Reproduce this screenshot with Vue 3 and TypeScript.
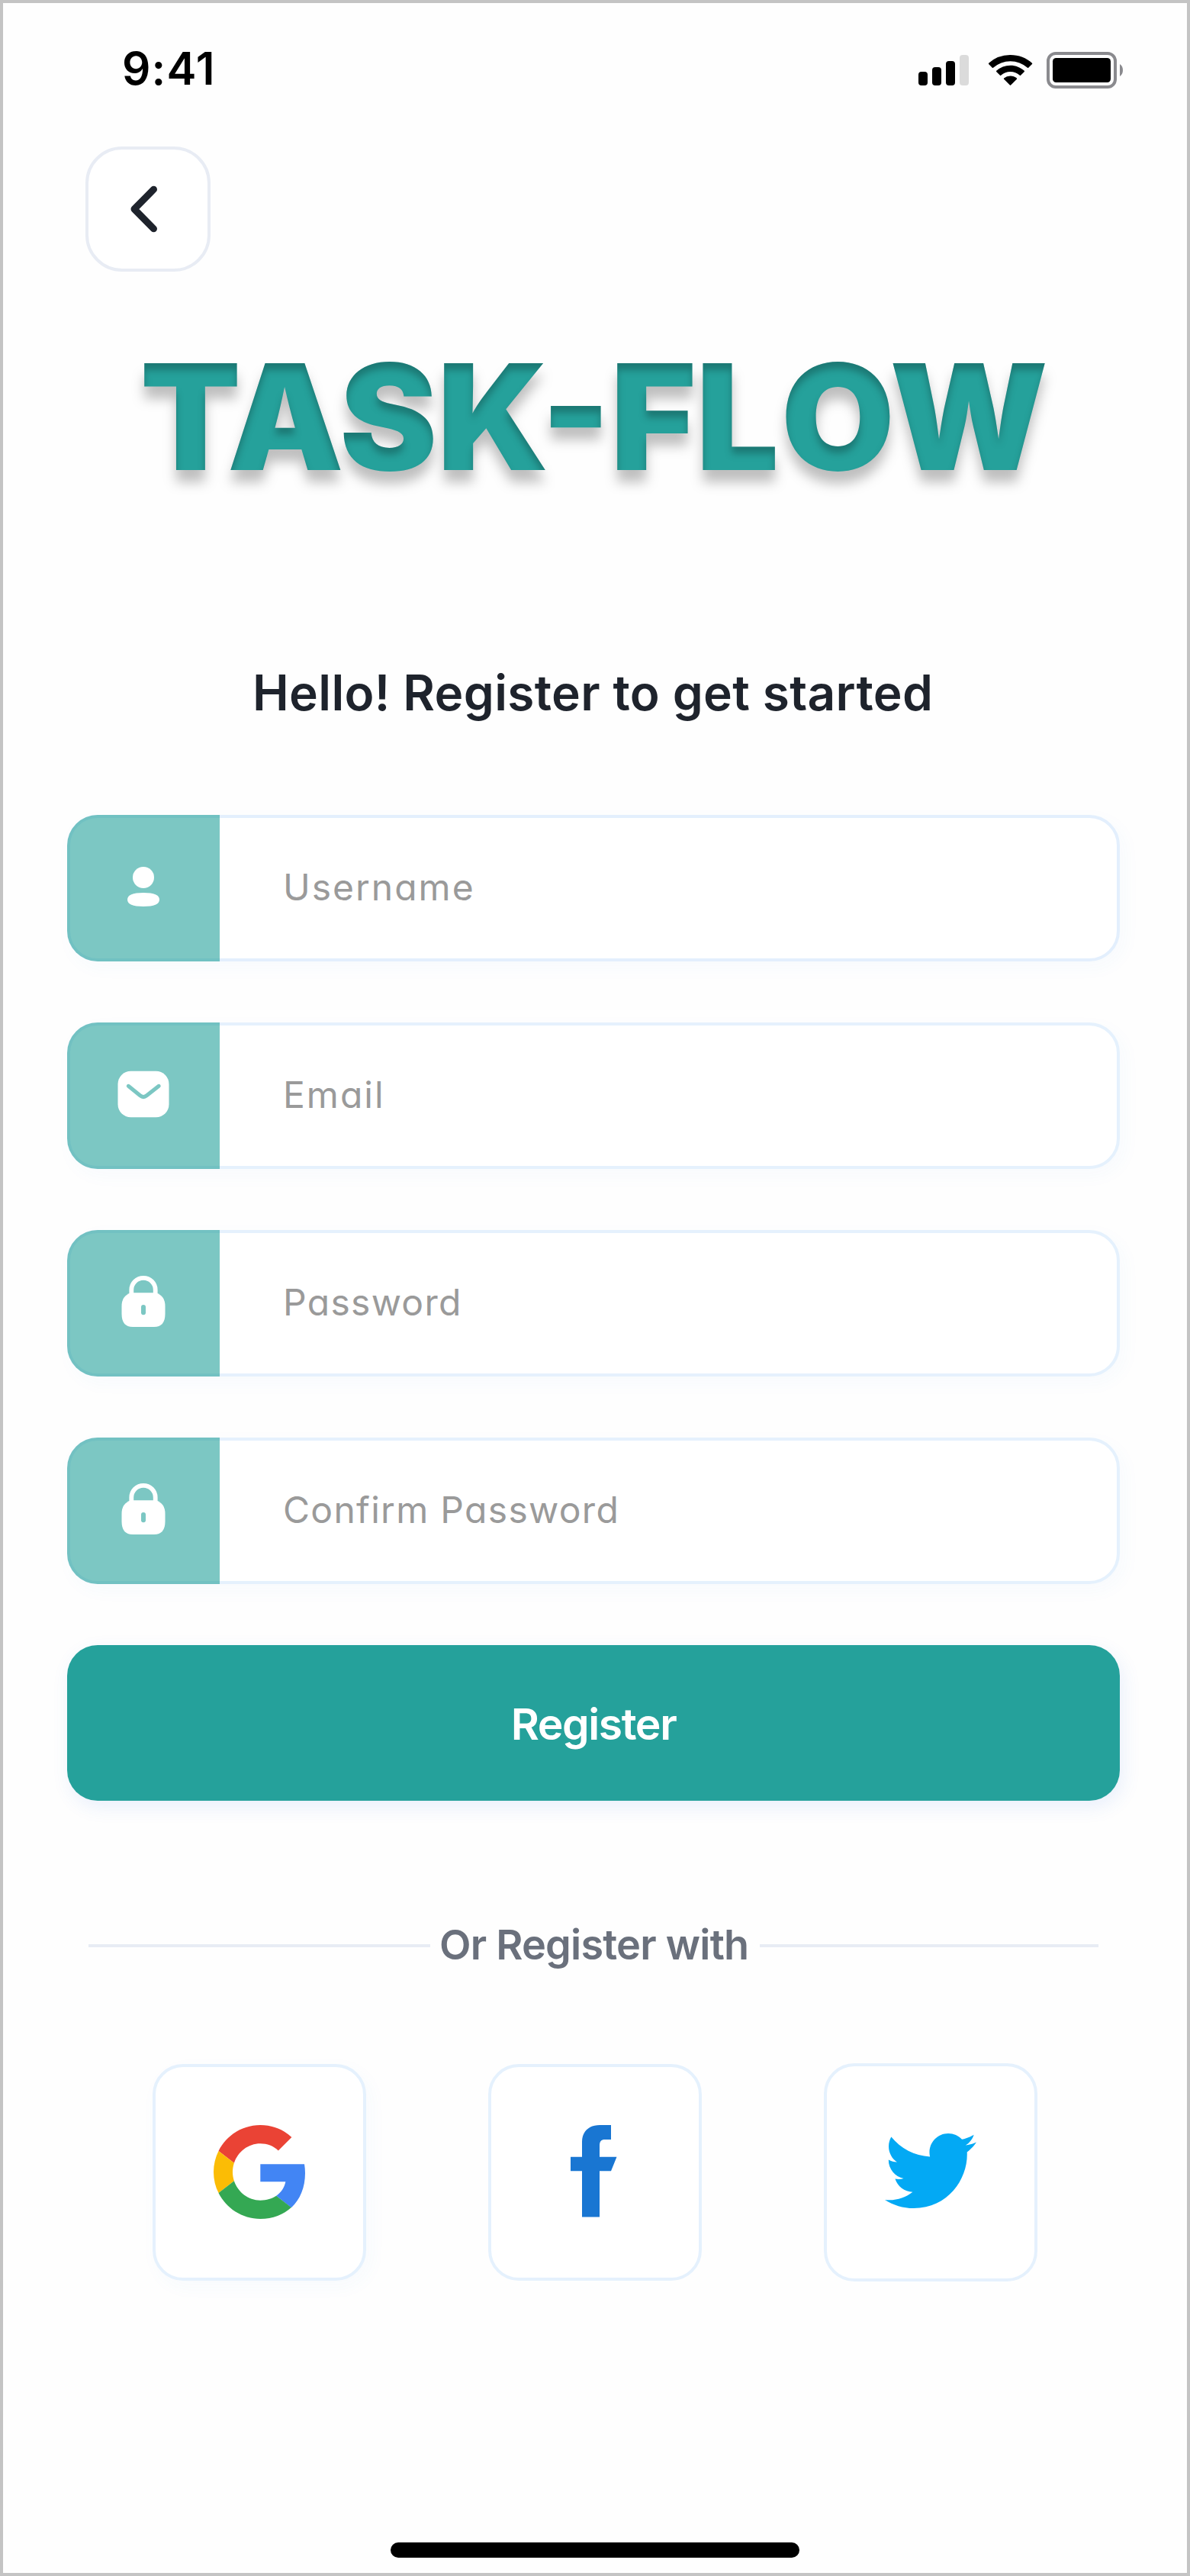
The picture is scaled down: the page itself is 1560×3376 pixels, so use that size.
<script setup lang="ts">
type IconName = 'user' | 'mail' | 'lock'

interface Field {
  id: string
  label: string
  icon: IconName
}

const fields: Field[] = [
  { id: 'username', label: 'Username', icon: 'user' },
  { id: 'email', label: 'Email', icon: 'mail' },
  { id: 'password', label: 'Password', icon: 'lock' },
  { id: 'confirm', label: 'Confirm Password', icon: 'lock' },
]
</script>

<template>
  <div class="screen">
    <header class="status-bar">
      <span class="time">9:41</span>
      <div class="indicators">
        <svg class="signal" width="66" height="40" viewBox="0 0 66 40">
          <rect x="0" y="22" width="12" height="18" rx="4" />
          <rect x="18" y="16" width="12" height="24" rx="4" />
          <rect x="36" y="8" width="12" height="32" rx="4" />
          <rect x="54" y="0" width="12" height="40" rx="4" fill="#dbdbdb" />
        </svg>
        <svg class="wifi" width="58" height="40" viewBox="0 0 58 40">
          <path d="M28.5 0C39.500 0 49.600 4 57 10.700Q57.500 11.300 57 11.900L52.200 16.700Q51.700 17.200 51 16.700A34 34 0 0 0 6 16.700Q5.300 17.200 4.800 16.700L.1 11.900Q-.4 11.300.1 10.700A42.500 42.500 0 0 1 28.500 0Z" />
          <path d="M28.500 13.700C35.600 13.700 42 16.400 46.800 20.800Q47.300 21.400 46.800 21.900L42 26.700Q41.500 27.200 40.900 26.700A18.500 18.500 0 0 0 16.100 26.700Q15.500 27.200 15 26.700L10.200 21.900Q9.700 21.400 10.200 20.800A27 27 0 0 1 28.500 13.700Z" />
          <path d="M28.500 27.500C31.800 27.500 34.600 28.700 36.900 30.600Q37.400 31.200 36.900 31.700L29.100 39.500Q28.500 40.100 27.900 39.500L20.100 31.700Q19.600 31.200 20.100 30.600A13 13 0 0 1 28.500 27.500Z" />
        </svg>
        <svg class="battery" width="100" height="48" viewBox="0 0 100 48">
          <rect x="2" y="2" width="88" height="44" rx="10" fill="none" stroke="#8a8a8e" stroke-width="4" />
          <rect x="8" y="8" width="76" height="32" rx="4.500" />
          <path d="M96 16C98.600 17.500 100 20.500 100 24S98.600 30.500 96 32Z" fill="#8a8a8e" />
        </svg>
      </div>
    </header>

    <button class="back" type="button" aria-label="Back">
      <svg width="40" height="64" viewBox="0 0 40 64">
        <path d="M33.500 6.200 8 32 33.500 57.800" fill="none" stroke="#1e232c" stroke-width="9" stroke-linecap="round" stroke-linejoin="round" />
      </svg>
    </button>

    <svg class="defs" width="0" height="0" aria-hidden="true">
      <filter id="emboss" x="-5%" y="-20%" width="110%" height="150%" color-interpolation-filters="sRGB">
        <feGaussianBlur in="SourceAlpha" stdDeviation="8" result="dropBlur" />
        <feOffset in="dropBlur" dy="16" result="dropOffset" />
        <feFlood flood-color="#000" flood-opacity="0.250" result="shade" />
        <feComposite in="shade" in2="dropOffset" operator="in" result="drop" />
        <feGaussianBlur in="SourceAlpha" stdDeviation="5" result="innerBlur" />
        <feOffset in="innerBlur" dy="9" result="innerOffset" />
        <feComposite in="SourceAlpha" in2="innerOffset" operator="out" result="innerMask" />
        <feComposite in="shade" in2="innerMask" operator="in" result="inner" />
        <feMerge>
          <feMergeNode in="drop" />
          <feMergeNode in="SourceGraphic" />
          <feMergeNode in="inner" />
        </feMerge>
      </filter>
    </svg>
    <h1 class="brand">TASK-FL<span class="tail">OW</span></h1>
    <h2 class="greeting">Hello! Register to get started</h2>

    <form class="form" @submit.prevent>
      <label v-for="field in fields" :key="field.id" class="field" :class="field.id">
        <span class="badge">
          <svg v-if="field.icon === 'user'" width="80" height="80" viewBox="0 0 80 80" fill="#fff">
            <circle cx="40" cy="26" r="14" />
            <path d="M40 46C54 46 61 49 61 55S54 64 40 64 19 61 19 55 26 46 40 46Z" />
          </svg>
          <svg v-else-if="field.icon === 'mail'" width="80" height="80" viewBox="0 0 80 80">
            <rect x="6.500" y="7.800" width="67" height="60.400" rx="17" fill="#fff" />
            <path d="M20.300 27.300 35.700 39.800Q40 43.300 44.300 39.800L60.200 27.300" fill="none" stroke="#7cc7c3" stroke-width="5" stroke-linecap="round" />
          </svg>
          <svg v-else width="80" height="80" viewBox="0 0 80 80">
            <path d="M24.300 29.500V22.500A15.700 15.700 0 0 1 55.700 22.500V29.500" fill="none" stroke="#fff" stroke-width="5.800" />
            <path d="M24 26.300H56Q68.500 30 68.500 44V54Q68.500 71 54 71H26Q11.500 71 11.500 54V44Q11.500 30 24 26.300Z" fill="#fff" />
            <rect x="37" y="42" width="6" height="13.300" rx="3" fill="#7cc7c3" />
          </svg>
        </span>
        <span class="placeholder">{{ field.label }}</span>
      </label>
      <button class="submit" type="submit">Register</button>
    </form>

    <div class="divider">
      <span class="rule left"></span>
      <span class="or">Or Register with</span>
      <span class="rule right"></span>
    </div>

    <div class="socials">
      <button class="social google" type="button" aria-label="Google">
        <svg width="120" height="123" viewBox="0 0 46.980 48" preserveAspectRatio="none">
          <path fill="#ea4335" d="M24 9.500c3.540 0 6.710 1.220 9.210 3.600l6.850-6.850C35.900 2.380 30.470 0 24 0 14.620 0 6.510 5.380 2.560 13.220l7.980 6.190C12.430 13.720 17.740 9.500 24 9.500z" />
          <path fill="#4285f4" d="M46.980 24.550c0-1.570-.15-3.090-.38-4.550H24v9.020h12.940c-.58 2.960-2.260 5.480-4.780 7.180l7.730 6c4.510-4.180 7.090-10.360 7.090-17.650z" />
          <path fill="#fbbc05" d="M10.530 28.590c-.48-1.450-.76-2.990-.76-4.590s.27-3.140.76-4.590l-7.980-6.190C.92 16.460 0 20.120 0 24c0 3.880.92 7.540 2.560 10.780l7.970-6.190z" />
          <path fill="#34a853" d="M24 48c6.480 0 11.930-2.130 15.890-5.810l-7.730-6c-2.150 1.450-4.920 2.300-8.160 2.300-6.260 0-11.570-4.220-13.470-9.910l-7.980 6.190C6.510 42.620 14.620 48 24 48z" />
        </svg>
      </button>
      <button class="social facebook" type="button" aria-label="Facebook">
        <svg width="61" height="121" viewBox="0 0 61 121">
          <path fill="#1976d2" d="M38 120.500V60.300H53L60.500 41.700H38V27C38 21.500 40 19 45 19H53V0H38.500C24.500 0 15 8 15 22V41.700H0V60.300H15V120.500Z" />
        </svg>
      </button>
      <button class="social twitter" type="button" aria-label="Twitter">
        <svg width="120" height="98" viewBox="6 9 36 29" preserveAspectRatio="none">
          <path fill="#03a9f4" d="M42 12.429c-1.323.586-2.746.977-4.247 1.162 1.526-.906 2.700-2.351 3.251-4.058-1.428.837-3.010 1.452-4.693 1.776C34.967 9.884 33.050 9 30.926 9c-4.080 0-7.387 3.278-7.387 7.320 0 .572.067 1.129.193 1.670-6.138-.308-11.582-3.226-15.224-7.654-.64 1.082-1 2.349-1 3.686 0 2.541 1.301 4.778 3.285 6.096-1.211-.037-2.351-.374-3.349-.914 0 .022 0 .055 0 .086 0 3.551 2.547 6.508 5.923 7.181-.617.169-1.269.263-1.941.263-.477 0-.942-.054-1.392-.135.94 2.902 3.667 5.023 6.898 5.086-2.528 1.960-5.712 3.134-9.174 3.134-.598 0-1.183-.034-1.761-.104C9.268 36.786 13.152 38 17.321 38c13.585 0 21.017-11.156 21.017-20.834 0-.317-.01-.633-.025-.945C39.763 15.197 41.013 13.905 42 12.429" />
        </svg>
      </button>
    </div>

    <div class="home-indicator"></div>
  </div>
</template>

<style>
body {
  margin: 0;
  background: #fefefe;
}
</style>

<style scoped>
.screen {
  box-sizing: border-box;
  display: flex;
  flex-direction: column;
  width: 1560px;
  height: 3376px;
  border: 4px solid #c4c4c4;
  background: #fefefe;
  font-family: Inter, 'Liberation Sans', sans-serif;
  white-space: nowrap;
}

button {
  padding: 0;
  font: inherit;
}

svg {
  display: block;
  flex: none;
}

.defs {
  position: absolute;
}

.status-bar {
  display: flex;
  justify-content: space-between;
  align-items: center;
  height: 48px;
  margin: 64px 84px 0 156px;
}

.time {
  padding-bottom: 4px;
  color: #000;
  font-size: 58.5px;
  font-weight: 600;
  line-height: 44px;
  letter-spacing: 1.2px;
}

.indicators {
  display: flex;
  align-items: center;
}

.signal {
  margin-right: 26px;
}

.wifi {
  margin-right: 18px;
}

.back {
  box-sizing: border-box;
  display: flex;
  justify-content: center;
  align-items: center;
  width: 164px;
  height: 164px;
  margin: 76px 0 0 108px;
  padding-right: 12px;
  border: 4px solid #e8ecf4;
  border-radius: 48px;
  background: #fff;
}

.brand {
  margin: 70px 0 0 180px;
  color: #25a19b;
  font-size: 192px;
  font-weight: 900;
  line-height: 240px;
  filter: url(#emboss);
}

.tail {
  margin-left: 3px;
  letter-spacing: 2px;
}

.greeting {
  margin: 202px 0 0 327px;
  color: #1e232c;
  font-size: 64px;
  font-weight: 600;
  line-height: 80px;
  letter-spacing: 0.36px;
}

.form {
  display: flex;
  flex-direction: column;
  gap: 80px;
  width: 1380px;
  margin: 120px 0 0 84px;
}

.field {
  box-sizing: border-box;
  display: flex;
  align-items: center;
  height: 192px;
  border: 4px solid #e5f1fd;
  border-radius: 40px;
  background: #fff;
  box-shadow: 6px 8px 24px rgba(60, 130, 230, 0.035);
}

.field.username {
  border-color: #e3effd;
}

.badge {
  box-sizing: border-box;
  display: flex;
  flex: none;
  justify-content: center;
  align-items: center;
  width: 200px;
  height: 192px;
  margin-left: -4px;
  border-radius: 40px 0 0 40px;
  background: rgba(37, 161, 155, 0.6);
}

.placeholder {
  padding-bottom: 2px;
  margin-left: 83px;
  color: #9a9a9a;
  font-size: 48px;
  font-feature-settings: 'cv11';
  line-height: 72px;
  letter-spacing: 1.3px;
}

.username .placeholder,
.email .placeholder {
  letter-spacing: 2px;
}

.submit {
  height: 204px;
  padding-top: 3px;
  border: 0;
  border-radius: 40px;
  background: #25a19b;
  box-shadow: 4px 8px 24px rgba(50, 110, 230, 0.1);
  color: #fff;
  font-size: 57px;
  font-weight: 600;
  line-height: 72px;
  letter-spacing: -1.4px;
}

.divider {
  display: flex;
  align-items: center;
  height: 72px;
  margin: 154px 0 0 112px;
}

.rule {
  height: 4px;
  background: #e8ecf4;
}

.rule.left {
  width: 448px;
}

.rule.right {
  width: 444px;
}

.or {
  box-sizing: border-box;
  width: 432px;
  padding: 0 0 3px 12px;
  color: #6a707c;
  font-size: 54px;
  font-weight: 600;
  line-height: 72px;
  letter-spacing: -0.78px;
}

.socials {
  display: flex;
  gap: 160px;
  margin: 119px 0 0 196px;
}

.social {
  box-sizing: border-box;
  display: flex;
  justify-content: center;
  align-items: center;
  width: 280px;
  height: 284px;
  border: 4px solid #e5f1fd;
  border-radius: 40px;
  background: #fff;
}

.google {
  padding-bottom: 2px;
  box-shadow: 6px 8px 24px rgba(60, 130, 230, 0.035);
}

.facebook {
  padding-right: 4px;
  padding-bottom: 4px;
}

.twitter {
  height: 286px;
  margin-top: -1px;
  padding-bottom: 4px;
}

.home-indicator {
  width: 536px;
  height: 20px;
  margin: auto auto 20px 508px;
  border-radius: 10px;
  background: #000;
}
</style>
